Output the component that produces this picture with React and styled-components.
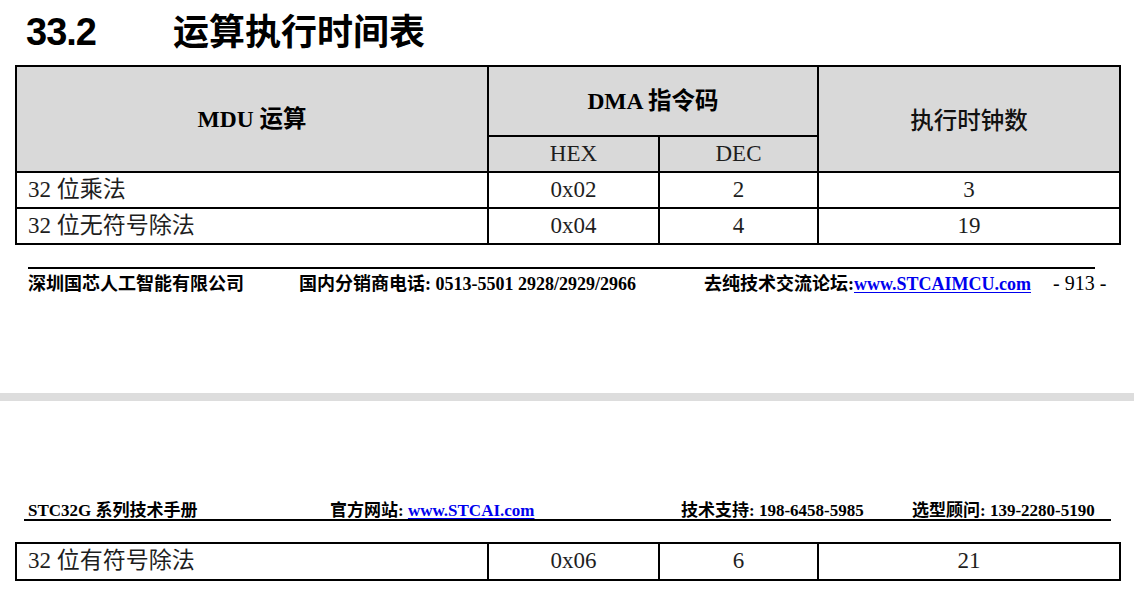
import React from 'react';
import styled, { createGlobalStyle } from 'styled-components';

const GlobalStyle = createGlobalStyle`
  html, body {
    margin: 0;
    padding: 0;
    background: #fff;
  }
  body {
    width: 1134px;
    height: 596px;
    overflow: hidden;
    font-family: "Liberation Serif", "Noto Sans CJK SC", serif;
    color: #000;
  }
`;

const COLS = '472px 171px 159px 302px';

const Page = styled.div`
  width: 1134px;
  height: 596px;
  display: flex;
  flex-direction: column;
`;

const Heading = styled.h1`
  margin: 0;
  height: 65px;
  box-sizing: border-box;
  padding: 7px 0 0 26px;
  display: flex;
  align-items: baseline;
  font-weight: 700;
`;

const SectionNo = styled.span`
  width: 147px;
  font-family: "Liberation Sans", Arial, sans-serif;
  font-size: 38px;
  line-height: 44px;
  letter-spacing: -1px;
`;

const SectionTitle = styled.span`
  font-family: "Noto Sans CJK SC", sans-serif;
  font-size: 36px;
  line-height: 44px;
`;

const Grid = styled.div`
  display: grid;
  grid-template-columns: ${COLS};
  grid-template-rows: ${(p) => p.$rows};
  width: max-content;
  margin: ${(p) => p.$margin} 0 0 15px;
  border-top: 2px solid #000;
  border-left: 2px solid #000;
`;

const Cell = styled.div`
  box-sizing: border-box;
  border-right: 2px solid #000;
  border-bottom: 2px solid #000;
  display: flex;
  align-items: center;
  justify-content: ${(p) => (p.$left ? 'flex-start' : 'center')};
  padding: ${(p) => (p.$left ? '0 0 1px 11px' : '0 0 1px 0')};
  grid-row: ${(p) => p.$row || 'auto'};
  grid-column: ${(p) => p.$col || 'auto'};
  background: ${(p) => (p.$head ? '#d9d9d9' : '#fff')};
  font-size: 23px;
  line-height: 28px;
  color: #1e1e1e;
  white-space: nowrap;
`;

const HeadLabel = styled.span`
  font-weight: 700;
  font-size: 23.5px;
  color: #000;
`;

const SansHead = styled.span`
  font-family: "Noto Sans CJK SC", sans-serif;
  font-weight: 500;
  font-size: 23.5px;
  color: #111;
`;

const Footer = styled.div`
  margin: 22px 0 0 28px;
  width: 1067px;
  border-top: 2px solid #000;
  padding-top: 1px;
`;

const Strip = styled.div`
  display: flex;
  align-items: baseline;
  height: ${(p) => p.$h || '24px'};
  white-space: nowrap;
  font-size: ${(p) => p.$size};
  line-height: 24px;
  font-weight: 700;
`;

const Part = styled.span`
  width: ${(p) => p.$w || 'auto'};
  flex: none;
  font-weight: ${(p) => (p.$plain ? 400 : 700)};
  font-size: ${(p) => (p.$plain ? '20px' : 'inherit')};
`;

const Cjk = styled.span`
  font-family: "Noto Sans CJK SC", sans-serif;
  font-weight: 700;
`;

const Link = styled.a`
  color: #0000ee;
  text-decoration: underline;
  text-underline-offset: 2px;
  font-weight: 700;
`;

const Band = styled.div`
  margin-top: 99px;
  height: 8px;
  background: #dddddd;
`;

const RunHeader = styled.div`
  margin: 96px 0 0 24px;
  width: 1087px;
  padding: 0 0 0 4px;
  box-sizing: border-box;
  border-bottom: 2px solid #000;
`;

const rows = [
  ['32 位乘法', '0x02', '2', '3'],
  ['32 位无符号除法', '0x04', '4', '19'],
];

const BodyRow = ({ row }) => (
  <>
    <Cell $left>{row[0]}</Cell>
    <Cell>{row[1]}</Cell>
    <Cell>{row[2]}</Cell>
    <Cell>{row[3]}</Cell>
  </>
);

export default function App() {
  return (
    <Page>
      <GlobalStyle />
      <Heading>
        <SectionNo>33.2</SectionNo>
        <SectionTitle>运算执行时间表</SectionTitle>
      </Heading>

      <Grid $rows="70px 36px 36px 36px" $margin="0">
        <Cell $head $row="1 / span 2" $col="1">
          <HeadLabel>MDU 运算</HeadLabel>
        </Cell>
        <Cell $head $row="1" $col="2 / span 2">
          <HeadLabel>DMA 指令码</HeadLabel>
        </Cell>
        <Cell $head $row="1 / span 2" $col="4">
          <SansHead>执行时钟数</SansHead>
        </Cell>
        <Cell $head $row="2" $col="2">HEX</Cell>
        <Cell $head $row="2" $col="3">DEC</Cell>
        {rows.map((r) => (
          <BodyRow key={r[0]} row={r} />
        ))}
      </Grid>

      <Footer>
        <Strip $size="18px">
          <Part $w="271px"><Cjk>深圳国芯人工智能有限公司</Cjk></Part>
          <Part $w="405px"><Cjk>国内分销商电话</Cjk>: 0513-5501 2928/2929/2966</Part>
          <Part $w="349px">
            <Cjk>去纯技术交流论坛</Cjk>:<Link href="#">www.STCAIMCU.com</Link>
          </Part>
          <Part $plain>- 913 -</Part>
        </Strip>
      </Footer>

      <Band />

      <RunHeader>
        <Strip $size="17px" $h="22px">
          <Part $w="302px">STC32G <Cjk>系列技术手册</Cjk></Part>
          <Part $w="351px"><Cjk>官方网站</Cjk>: <Link href="#">www.STCAI.com</Link></Part>
          <Part $w="231px"><Cjk>技术支持</Cjk>: 198-6458-5985</Part>
          <Part><Cjk>选型顾问</Cjk>: 139-2280-5190</Part>
        </Strip>
      </RunHeader>

      <Grid $rows="37px" $margin="21px">
        <BodyRow row={['32 位有符号除法', '0x06', '6', '21']} />
      </Grid>
    </Page>
  );
}
